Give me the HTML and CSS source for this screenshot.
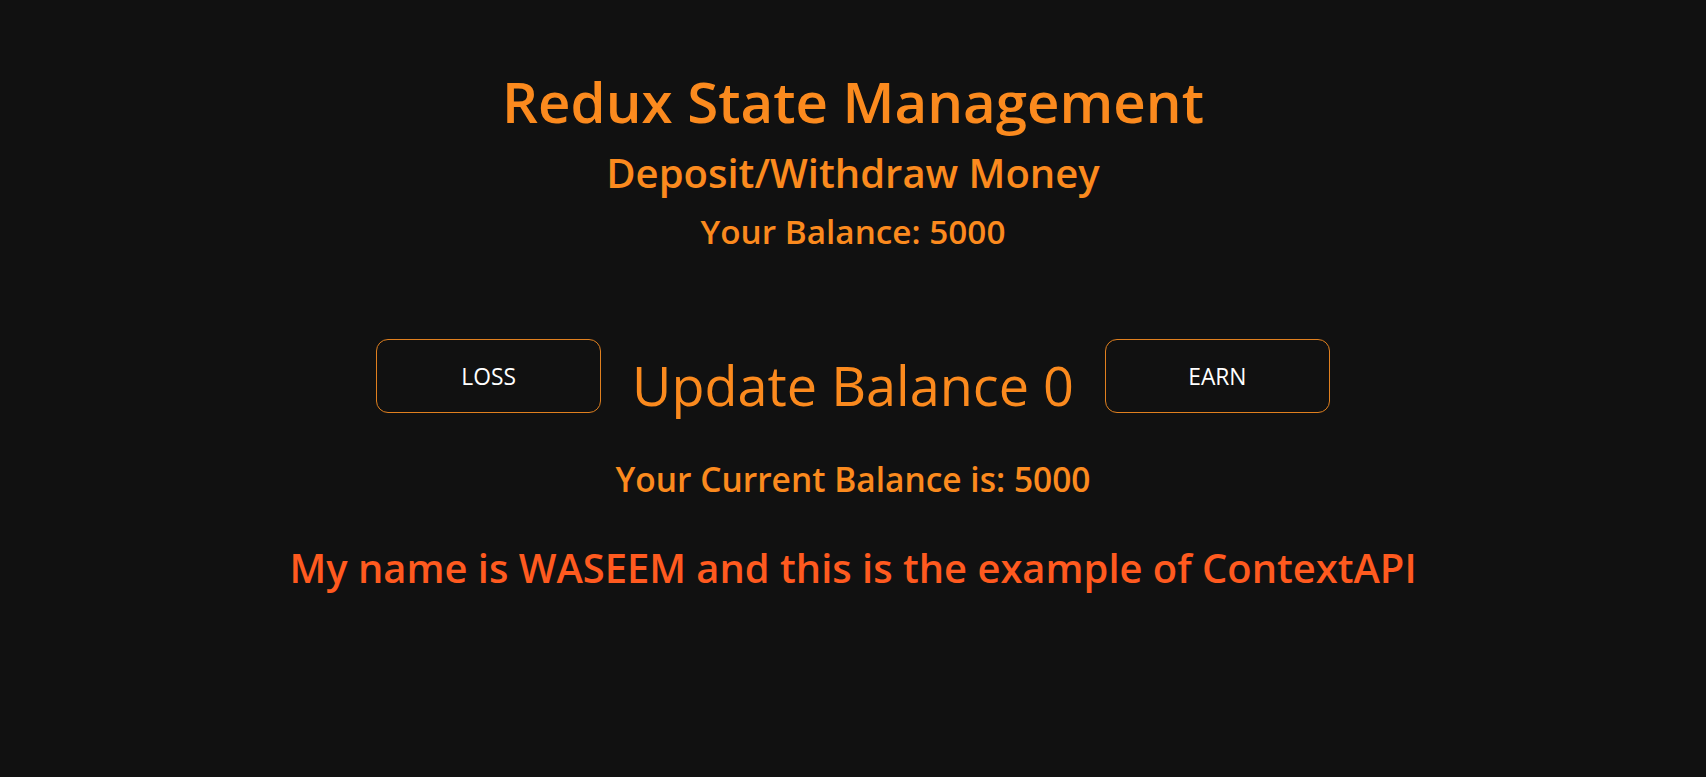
FILE: index.html
```html
<!DOCTYPE html>
<html lang="en">
<head>
<meta charset="utf-8">
<title>Redux State Management</title>
<link rel="stylesheet" href="styles.css">
</head>
<body>
<div class="app">
  <h1 class="title">Redux State Management</h1>
  <h2 class="subtitle">Deposit/Withdraw Money</h2>
  <h3 class="balance">Your Balance: 5000</h3>
  <div class="controls">
    <button class="btn">LOSS</button>
    <span class="update">Update Balance 0</span>
    <button class="btn">EARN</button>
  </div>
  <h3 class="current">Your Current Balance is: 5000</h3>
  <h2 class="name">My name is WASEEM and this is the example of ContextAPI</h2>
</div>
</body>
</html>
```

FILE: styles.css
```css
html, body {
  margin: 0;
  padding: 0;
  background: #111111;
}
body {
  min-height: 100vh;
  font-family: "Open Sans", "Noto Sans", sans-serif;
}
.app {
  display: flex;
  flex-direction: column;
  align-items: center;
  padding-top: 67px;
  color: #fb8a1e;
}
.title, .subtitle, .balance, .current, .name {
  margin: 0;
  text-align: center;
  white-space: nowrap;
}
.title {
  font-size: 56.4px;
  font-weight: 600;
  line-height: 70px;
}
.subtitle {
  margin-top: 11px;
  font-size: 40px;
  font-weight: 600;
  line-height: 50px;
}
.balance {
  margin-top: 13px;
  font-size: 33.3px;
  font-weight: 600;
  line-height: 40px;
}
.controls {
  margin-top: 88px;
  display: flex;
  align-items: flex-start;
  gap: 31px;
}
.btn {
  width: 225px;
  height: 74px;
  background: transparent;
  border: 1px solid #e0801f;
  border-radius: 12px;
  color: #ffffff;
  font-family: "Open Sans", "Noto Sans", sans-serif;
  font-size: 22.8px;
  font-weight: 400;
  cursor: pointer;
}
.update {
  padding-top: 9px;
  font-size: 54px;
  font-weight: 400;
  line-height: 74px;
  white-space: nowrap;
}
.current {
  margin-top: 37px;
  font-size: 33.5px;
  font-weight: 600;
  line-height: 40px;
}
.name {
  margin-top: 44px;
  font-size: 39.9px;
  font-weight: 600;
  line-height: 50px;
  color: #ff5a1f;
}
```
